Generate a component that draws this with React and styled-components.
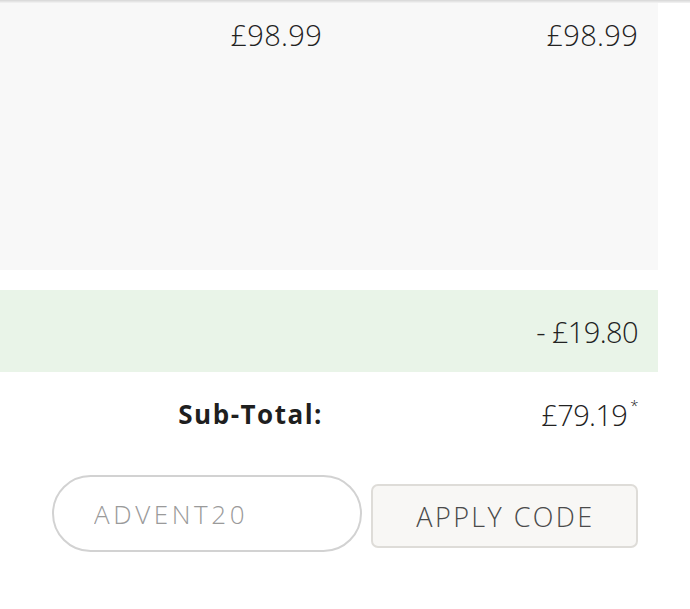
import React from "react";
import styled, { createGlobalStyle } from "styled-components";

const GlobalStyle = createGlobalStyle`
  body {
    margin: 0;
    background: #fff;
    font-family: "Open Sans", "Liberation Sans", sans-serif;
    color: #222;
  }
`;

const Page = styled.div`
  width: 690px;
  min-height: 609px;
`;

const TopShade = styled.div`
  height: 3px;
  background: linear-gradient(#d6d6d6, #f4f4f4);
`;

const Summary = styled.div`
  width: 658px;
`;

const Row = styled.div`
  display: grid;
  grid-template-columns: 322px 1fr;
  padding-right: 20px;
  box-sizing: border-box;
`;

const ItemRow = styled(Row)`
  background: #f8f8f8;
  height: 267px;
  padding-top: 17px;
  align-items: start;
`;

const DiscountRow = styled(Row)`
  background: #e9f4e8;
  height: 82px;
  margin-top: 20px;
  align-items: center;
`;

const TotalRow = styled(Row)`
  height: 84px;
  align-items: center;
`;

const Price = styled.div`
  grid-column: ${(p) => p.$col || "auto"};
  text-align: right;
  font-size: 29px;
  font-weight: 300;
  line-height: 1;
  color: #222;
  letter-spacing: ${(p) => p.$tight ? "-0.6px" : "0.3px"};
`;

const Label = styled.div`
  text-align: right;
  font-size: 26px;
  font-weight: 700;
  line-height: 1;
  color: #1f1f1f;
  letter-spacing: 1.5px;
  margin-right: -1px;
`;

const Star = styled.sup`
  font-size: 15px;
  position: relative;
  top: -4px;
  margin-left: 3px;
`;

const CouponRow = styled.form`
  display: flex;
  align-items: flex-start;
  gap: 9px;
  padding-left: 52px;
  margin-top: 19px;
`;

const CodeInput = styled.input`
  width: 310px;
  height: 77px;
  box-sizing: border-box;
  border: 2px solid #d2d2d2;
  border-radius: 40px;
  padding: 0 0 0 40px;
  font-family: "Open Sans", "Liberation Sans", sans-serif;
  font-size: 26px;
  font-weight: 300;
  letter-spacing: 3.6px;
  color: #999;
  outline: none;
  &::placeholder {
    color: #9a9a9a;
  }
`;

const ApplyButton = styled.button`
  margin-top: 9px;
  width: 267px;
  height: 64px;
  box-sizing: border-box;
  background: #f8f7f5;
  border: 2px solid #dedcd8;
  border-radius: 7px;
  font-family: "Open Sans", "Liberation Sans", sans-serif;
  font-size: 27px;
  font-weight: 300;
  color: #4a4a4a;
  letter-spacing: 2.4px;
  padding: 0 0 0 2px;
  cursor: pointer;
`;

export default function App() {
  return (
    <Page>
      <GlobalStyle />
      <TopShade />
      <Summary>
        <ItemRow>
          <Price>£98.99</Price>
          <Price>£98.99</Price>
        </ItemRow>
        <DiscountRow>
          <Price $col="2" $tight>- £19.80</Price>
        </DiscountRow>
        <TotalRow>
          <Label>Sub-Total:</Label>
          <Price $tight>
            £79.19<Star>*</Star>
          </Price>
        </TotalRow>
      </Summary>
      <CouponRow onSubmit={(e) => e.preventDefault()}>
        <CodeInput placeholder="ADVENT20" />
        <ApplyButton type="submit">APPLY CODE</ApplyButton>
      </CouponRow>
    </Page>
  );
}
